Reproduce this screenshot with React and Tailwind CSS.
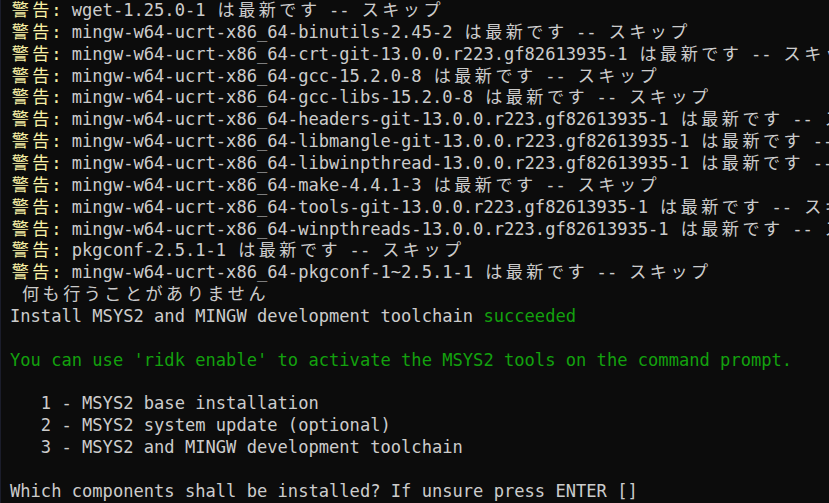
import React from 'react';

const pkgs = [
  'wget-1.25.0-1',
  'mingw-w64-ucrt-x86_64-binutils-2.45-2',
  'mingw-w64-ucrt-x86_64-crt-git-13.0.0.r223.gf82613935-1',
  'mingw-w64-ucrt-x86_64-gcc-15.2.0-8',
  'mingw-w64-ucrt-x86_64-gcc-libs-15.2.0-8',
  'mingw-w64-ucrt-x86_64-headers-git-13.0.0.r223.gf82613935-1',
  'mingw-w64-ucrt-x86_64-libmangle-git-13.0.0.r223.gf82613935-1',
  'mingw-w64-ucrt-x86_64-libwinpthread-13.0.0.r223.gf82613935-1',
  'mingw-w64-ucrt-x86_64-make-4.4.1-3',
  'mingw-w64-ucrt-x86_64-tools-git-13.0.0.r223.gf82613935-1',
  'mingw-w64-ucrt-x86_64-winpthreads-13.0.0.r223.gf82613935-1',
  'pkgconf-2.5.1-1',
  'mingw-w64-ucrt-x86_64-pkgconf-1~2.5.1-1',
];

// terminal renders full-width characters across two cells
const isWide = (ch) => {
  const c = ch.codePointAt(0);
  return (c >= 0x3000 && c <= 0x9fff) || (c >= 0xff00 && c <= 0xff60);
};

const Cells = ({ text }) =>
  Array.from(text).map((ch, i) =>
    isWide(ch) ? (
      <span key={i} className="inline-block w-[2ch] text-center">
        {ch}
      </span>
    ) : (
      ch
    )
  );

const Line = ({ children }) => (
  <div className="h-[21.86px] leading-[21.86px] whitespace-pre">{children}</div>
);

const Yellow = ({ children }) => <span className="text-[#f9f1a5]">{children}</span>;
const Green = ({ children }) => <span className="text-[#13a10e]">{children}</span>;

export default function App() {
  return (
    <div
      className="w-[829px] h-[503px] overflow-hidden bg-[#0c0c0c] text-[#cccccc] text-[17.1px] pl-[9px] border-l border-[#1b1d2b]"
      style={{ fontFamily: '"DejaVu Sans Mono", "Noto Sans CJK JP", monospace' }}
    >
      {pkgs.map((p) => (
        <Line key={p}>
          <Yellow>
            <Cells text="警告:" />
          </Yellow>{' '}
          {p} <Cells text="は最新です" /> -- <Cells text="スキップ" />
        </Line>
      ))}
      <Line>
        {' '}
        <Cells text="何も行うことがありません" />
      </Line>
      <Line>
        Install MSYS2 and MINGW development toolchain <Green>succeeded</Green>
      </Line>
      <Line> </Line>
      <Line>
        <Green>You can use 'ridk enable' to activate the MSYS2 tools on the command prompt.</Green>
      </Line>
      <Line> </Line>
      <Line>   1 - MSYS2 base installation</Line>
      <Line>   2 - MSYS2 system update (optional)</Line>
      <Line>   3 - MSYS2 and MINGW development toolchain</Line>
      <Line> </Line>
      <Line>Which components shall be installed? If unsure press ENTER []</Line>
    </div>
  );
}
